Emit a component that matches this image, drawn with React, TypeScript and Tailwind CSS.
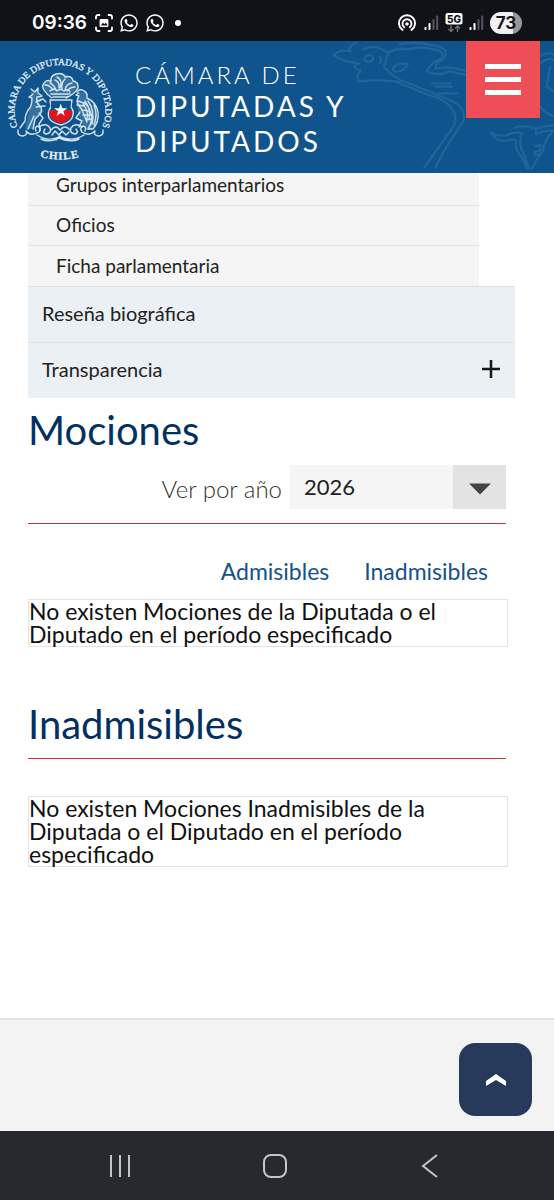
import { useState } from "react";
import { FaWhatsapp } from "react-icons/fa";

const submenu = ["Grupos interparlamentarios", "Oficios", "Ficha parlamentaria"];

const years = ["2026", "2025", "2024", "2023", "2022"];

const SignalIcon = () => (
  <svg width="15" height="15" viewBox="0 0 15 15" aria-hidden="true">
    <rect x="0.5" y="12" width="2" height="3" rx="0.8" fill="#fff" />
    <rect x="4.5" y="8" width="2" height="7" rx="0.8" fill="#fff" />
    <rect x="8.5" y="4" width="2" height="11" rx="0.8" fill="#55575c" />
    <rect x="12.2" y="0.5" width="2" height="14.5" rx="0.8" fill="#55575c" />
  </svg>
);

const StatusBar = () => (
  <div className="flex h-[41px] items-center justify-between bg-[#101218] px-8 pt-1 text-white">
    <div className="flex items-center gap-1.5">
      <span className="font-[Inter,sans-serif] text-[19px] leading-6 font-semibold">09:36</span>
      <svg className="ml-0.5" width="18" height="18" viewBox="0 0 18 18" fill="none" stroke="#fff" strokeWidth="1.8" strokeLinecap="round" aria-hidden="true">
        <path d="M1 4.5V3a2 2 0 0 1 2-2h1.5M13.5 1H15a2 2 0 0 1 2 2v1.5M17 13.5V15a2 2 0 0 1-2 2h-1.5M4.5 17H3a2 2 0 0 1-2-2v-1.5" />
        <path d="M4.6 6.2q0-1.2 1.2-1.2h6.4q1.2 0 1.2 1.2v5.6q0 1.2-1.2 1.2H5.8q-1.2 0-1.2-1.2z" fill="#fff" stroke="none" />
        <path d="M5.8 11.5l2.2-2.7 1.4 1.5 1.4-1.7 1.8 2.9z" fill="#101218" stroke="none" />
      </svg>
      <FaWhatsapp size={20} />
      <FaWhatsapp size={20} />
      <span className="ml-1 size-1.5 rounded-full bg-white" />
    </div>
    <div className="flex items-center gap-1.5">
      <svg width="18" height="18" viewBox="0 0 18 18" fill="none" stroke="#fff" strokeWidth="1.9" strokeLinecap="round" aria-hidden="true">
        <circle cx="9" cy="10" r="1.8" fill="#fff" stroke="none" />
        <path d="M4.5 15.9A8 8 0 1 1 13.5 15.9" />
        <path d="M6.2 13.2A4.5 4.5 0 1 1 11.8 13.2" />
      </svg>
      <span className="ml-0.5"><SignalIcon /></span>
      <svg width="18" height="20" viewBox="0 0 18 20" aria-hidden="true">
        <rect x="0.5" y="0" width="17" height="11.5" rx="2" fill="#fff" />
        <text x="9" y="9.6" textAnchor="middle" fontFamily="Inter, sans-serif" fontSize="10" fontWeight="800" fill="#101218">5G</text>
        <path d="M6 12.5v6M3.5 16l2.5 2.5L8.5 16M12.5 19v-6M10 15.5l2.5-2.5 2.5 2.5" fill="none" stroke="#6b6d72" strokeWidth="1.5" />
      </svg>
      <SignalIcon />
      <span className="flex h-[22px] w-8 items-center justify-center rounded-full bg-linear-to-r from-[#f1f1f3] from-73% to-[#97989c] to-73% font-[Inter,sans-serif] text-[17px] leading-5 font-bold text-[#17181c]">
        73
      </span>
    </div>
  </div>
);

const Crest = () => (
  <svg width="110" height="110" viewBox="5 13 110 110" role="img" aria-label="Cámara de Diputadas y Diputados de Chile">
    <defs>
      <path id="ring" d="M18 88A45.500 45.500 0 1 1 102 88" />
      <path id="base" d="M34 115Q60 124 86 115" />
    </defs>
    <g fill="#e6f0f8" stroke="#e6f0f8" strokeWidth="0.3" fontFamily="Liberation Serif, serif">
      <text fontSize="9.5">
        <textPath href="#ring" startOffset="50%" textAnchor="middle">CAMARA DE DIPUTADAS Y DIPUTADOS</textPath>
      </text>
      <text fontSize="11" fontWeight="700" letterSpacing="1">
        <textPath href="#base" startOffset="50%" textAnchor="middle">CHILE</textPath>
      </text>
    </g>
    {/* soft silhouettes behind the line work */}
    <g fill="#8fb5d3" fillOpacity="0.3">
      <path d="M50 56q-9-8-5-14q4-4 7-2q3-7 9-6q7-1 9 5q8 0 8 8q-3 6-10 9z" />
      <path d="M31 50l5 2 6 4-2 9 4 6-8 8-3 10H25l3-14 3-10z" />
      <path d="M80 52l7 1 1 7q9 8 9 18l-6 12h-6l-6-14-3-16z" />
    </g>
    <g fill="none" stroke="#d3e4f1" strokeWidth="1.4" strokeLinecap="round" strokeLinejoin="round">
      {/* plumes */}
      <path d="M52 58q-5-3-8-8q-3-4 1-8q3-3 6 0q-1-6 5-8q7-2 9 3q7-2 8 4q6 1 5 7q-3 6-12 10" />
      <path d="M45 45q5 0 8 5M50 43q4 2 6 7M57 37q6 3 3 11M55 40q5 2 4 8M65 39q-4 4-3 10M72 43q-6 1-7 7M75 47q-5 0-8 4" />
      <path d="M50 51q4-4 7 0q3-3 7 0q4-3 6 1M51 54h19M53 57h15" />
      {/* huemul */}
      <path d="M31 49l4 3 3-4 0 5 4 3-5 1q-1 7 3 9q3 3 0 8l-5 5-2 10M33 54q-2 2-4 3l3 1q0 8-3 11q-4 5-4 12l-5 7M36 62l7-3 3 3M36 67l9-1M34 76l-6 13M39 73l4 5-4 6 1 6" />
      {/* condor */}
      <path d="M77 52q3-4 7-1q4 2 3 7q9 4 11 14q1 10-5 17l-5 0q6-9 2-18q-2-6-6-8M79 53l-3 2 3 1q-3 5-1 8l4 6 5 12M85 61q6 8 4 18M88 61q7 9 4 23M83 64q6 7 4 15M80 72l-4 6 6 3-3 6M94 65q4 9 0 20" />
      <path d="M78 61l6 2M77 65l7 1M82 70l7 1M83 75l8 0M86 80l7-1" />
      {/* shield */}
      <path d="M50 60h22l-1 7q4 5 1 11q-3 5-11 7q-9-2-12-7q-2-6 2-11z" />
      {/* scrolls */}
      <path d="M18 90q-1 6 5 6q5-1 3-5q5 6 13 1q3-4-1-6q-4 1-2 5M103 90q1 6-5 6q-5-1-3-5q-6 6-13 1q-3-4 1-6q4 1 2 5" />
      <path d="M39 87q7-5 11 1q2 5-4 6q-4-1-1-5M82 87q-7-5-11 1q-2 5 4 6q4-1 1-5M51 90q5-6 9 0q5-6 10 0M37 95q11 7 23 2q13 5 24-2M41 99q9 4 18-1q12 5 20 1" />
      <path d="M52 95l3-4 4 4 3-4 4 4 3-3M56 100l4-4 4 4" />
    </g>
    <path d="M51 61h20l-1 9H51z" fill="#0f548c" />
    <path d="M49.5 70h22.5q1 10-11.500 13.500Q48 80 49.500 70z" fill="#e0151f" />
    <path d="M60.700 63.500l1.600 4.700h5l-4 3 1.500 4.800-4.100-2.900-4.100 2.900 1.500-4.800-4-3h5z" fill="#fff" />
  </svg>
);

const HeaderArt = () => (
  <svg className="absolute top-0 right-0" width="234" height="132" viewBox="0 3 702 396" fill="none" stroke="#2f73a8" strokeWidth="7" strokeLinejoin="round" strokeLinecap="round" strokeOpacity="0.5" aria-hidden="true">
    <path d="M110 8Q80 20 92 34Q60 26 40 46Q70 66 118 70Q88 78 122 92Q105 112 118 124Q170 118 228 124Q300 156 360 176Q420 210 402 256Q350 330 312 384" />
    <path d="M128 28Q170 10 204 40Q196 66 192 82Q212 104 240 120Q310 146 388 180Q440 200 430 244Q370 330 346 384" />
    <path d="M140 47q14-6 20 8q-4 14-20 10q-12-8 0-18M178 50q10 8 2 18" />
    <path d="M218 86Q228 66 264 72Q248 98 222 94z" />
    <path d="M206 38Q230 22 262 28Q316 16 360 34Q380 46 352 62Q330 72 320 94Q350 110 388 94L436 104" />
    <path d="M240 12Q290 4 340 16Q392 24 372 56Q344 70 346 86Q384 76 436 92" />
    <path d="M335 130h56M345 140h50M355 160h55" />
    <path d="M664 46Q690 34 702 44M664 68Q690 50 702 60M690 80L680 140L702 154M662 202Q680 224 702 228" />
    <path d="M514 278Q530 290 560 286Q580 274 606 280Q596 300 604 328Q620 360 626 386M514 280Q530 306 560 302Q578 296 588 300Q584 330 604 350Q616 370 620 384" />
    <path d="M582 264Q610 252 648 266Q680 256 702 256M648 266v16Q672 270 702 272Q672 300 668 334Q648 360 636 386" />
    <path d="M646 318l16-4-2 18-18 4 4 12 14-6" />
  </svg>
);

const Header = () => (
  <header className="relative flex h-[132px] items-start justify-between overflow-hidden bg-[#0f548c] pr-3.5 text-white">
    <HeaderArt />
    <a href="#inicio" className="relative flex items-start gap-5 pt-3 pl-[5px]">
      <Crest />
      <span className="flex flex-col pt-1 tracking-[3px]">
        <span className="text-2xl leading-9 font-light">CÁMARA DE</span>
        <span className="-mt-1 text-[28px] leading-[35px]">
          DIPUTADAS Y<br />DIPUTADOS
        </span>
      </span>
    </a>
    <button type="button" aria-label="Menú" className="relative flex h-[77px] w-[74px] shrink-0 flex-col items-center justify-center gap-2 bg-[#f04e56]">
      <span className="h-[5px] w-9 bg-white" />
      <span className="h-[5px] w-9 bg-white" />
      <span className="h-[5px] w-9 bg-white" />
    </button>
  </header>
);

const SideMenu = () => (
  <nav className="mr-[39px] ml-7 overflow-hidden text-[#222]">
    <ul className="-mt-[7px] mr-9 bg-[#f5f5f5] text-[19px]">
      {submenu.map((item) => (
        <li key={item} className="h-10 border-b border-[#e0e2e4] last:border-b-0">
          <a href="#detalle" className="flex h-full items-center pl-7">{item}</a>
        </li>
      ))}
    </ul>
    <div className="bg-[#ebf0f4] text-xl">
      <a href="#resena" className="flex h-14 items-center border-t border-[#d9e2e7] px-3.5 pb-1">Reseña biográfica</a>
      <button type="button" className="flex h-14 w-full items-center justify-between border-t border-[#dfe3e6] px-3.5 pb-1">
        Transparencia
        <svg width="20" height="20" viewBox="0 0 20 20" stroke="#16181a" strokeWidth="2.5" aria-hidden="true">
          <path d="M10 1v18M1 10h18" />
        </svg>
      </button>
    </div>
  </nav>
);

const EmptyMessage = ({ text }: { text: string }) => (
  <p className="-mr-0.5 border border-[#e3e3e3] text-[23px] leading-[23px] text-[#111]">{text}</p>
);

const AndroidNav = () => (
  <div className="grid h-[69px] grid-cols-3 items-center justify-items-center bg-[#28292e] pr-[46px] pl-[42px]">
    <button type="button" aria-label="Recientes">
      <svg width="24" height="24" viewBox="0 0 24 24" stroke="#c4c5c8" strokeWidth="2" aria-hidden="true">
        <path d="M3 1v22M12 1v22M21 1v22" />
      </svg>
    </button>
    <button type="button" aria-label="Inicio">
      <svg width="24" height="24" viewBox="0 0 24 24" fill="none" stroke="#c4c5c8" strokeWidth="2" aria-hidden="true">
        <rect x="1" y="1" width="22" height="22" rx="7" />
      </svg>
    </button>
    <button type="button" aria-label="Atrás">
      <svg width="24" height="24" viewBox="0 0 24 24" fill="none" stroke="#c4c5c8" strokeWidth="2" aria-hidden="true">
        <path d="M19 1L5 12l14 11" />
      </svg>
    </button>
  </div>
);

const App = () => {
  const [year, setYear] = useState("2026");

  return (
    <div className="flex min-h-screen flex-col bg-white font-[Lato,sans-serif]">
      <StatusBar />
      <Header />
      <SideMenu />
      <main className="flex-1 pr-12 pb-10 pl-7">
        <section>
          <h2 className="mt-3 text-[40px] leading-10 text-[#03305f]">Mociones</h2>
          <div className="mt-[15px] flex items-center justify-end gap-2 border-b border-[#c4343a] pb-3.5">
            <label htmlFor="year" className="pt-1 text-2xl font-light text-[#333]">Ver por año</label>
            <div className="relative">
              <select
                id="year"
                value={year}
                onChange={(e) => setYear(e.target.value)}
                className="block h-11 w-[216px] appearance-none bg-[#f5f5f5] pb-0.5 pl-3.5 text-[22px] text-[#222]"
              >
                {years.map((y) => (
                  <option key={y} value={y}>{y}</option>
                ))}
              </select>
              <span className="pointer-events-none absolute inset-y-0 right-0 flex w-[53px] items-center justify-center bg-[#e3e3e3] pt-1">
                <svg width="22" height="12" viewBox="0 0 22 12" aria-hidden="true">
                  <path d="M0 0.5h22L11 11.5z" fill="#444" />
                </svg>
              </span>
            </div>
          </div>
          <div className="mt-[33px] mb-3.5 flex justify-end gap-[35px] pr-[18px] text-[23px] leading-7 text-[#14528c]">
            <a href="#admisibles">Admisibles</a>
            <a href="#inadmisibles">Inadmisibles</a>
          </div>
          <EmptyMessage text="No existen Mociones de la Diputada o el Diputado en el período especificado" />
        </section>
        <section id="inadmisibles" className="mt-[57px]">
          <h2 className="mb-[37px] border-b border-[#c4343a] pb-3.5 text-[40px] leading-10 text-[#03305f]">Inadmisibles</h2>
          <EmptyMessage text="No existen Mociones Inadmisibles de la Diputada o el Diputado en el período especificado" />
        </section>
      </main>
      <footer className="flex h-[113px] items-start justify-end border-t-2 border-[#e2e2e2] bg-[#f3f3f3] pt-[23px] pr-[22px]">
        <button type="button" aria-label="Volver arriba" className="flex size-[73px] items-center justify-center rounded-2xl bg-[#283a5c]">
          <svg width="22" height="14" viewBox="0 0 22 14" aria-hidden="true">
            <path d="M1 8L11 1l10 7v5l-10-6-10 6z" fill="#fff" />
          </svg>
        </button>
      </footer>
      <AndroidNav />
    </div>
  );
};

export default App;
